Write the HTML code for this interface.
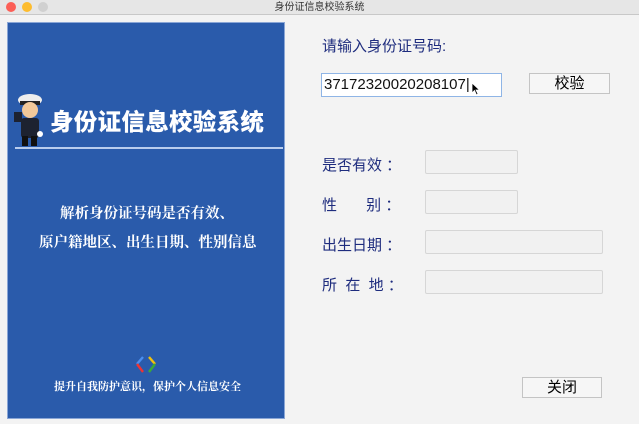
<!DOCTYPE html><html><head><meta charset="utf-8"><style>
*{margin:0;padding:0;box-sizing:border-box}
body{width:639px;height:424px;background:#f3f3f3;position:relative;overflow:hidden;font-family:"Liberation Sans","Noto Sans CJK SC",sans-serif}
.a{position:absolute;white-space:nowrap}
.tb{left:0;top:0;width:639px;height:15px;background:#e6e6e6;border-bottom:1px solid #c8c8c8;font-size:10px;color:#333;text-align:center;line-height:15px}
.dot{width:10px;height:10px;border-radius:50%;top:2px}
.panel{left:7px;top:22px;width:278px;height:397px;background:#2a5bab;border:1px solid #8aa6d6}
.w{color:#fff;font-family:"Noto Serif CJK SC",serif;font-weight:bold}
.lb{color:#1e2c7e;font-size:15px}
.f{background:#f1f1f1;border:1px solid #d6d6d6;border-radius:2px}
.btn{background:#f6f6f6;border:1px solid #c4c4c4;font-size:15px;text-align:center;color:#000}
</style></head><body>
<div class="a tb">身份证信息校验系统</div>
<div class="a dot" style="left:6px;background:#fc5f57"></div>
<div class="a dot" style="left:22px;background:#fdbc2e"></div>
<div class="a dot" style="left:38px;background:#d0d0d0"></div>
<div class="a panel"></div>
<svg class="a" style="left:10px;top:90px" width="36" height="58" viewBox="0 0 36 58">
<ellipse cx="20" cy="10" rx="12" ry="6" fill="#eee"/><rect x="10" y="11" width="20" height="4" fill="#222"/>
<circle cx="20" cy="20" r="8" fill="#f2c99a"/><rect x="11" y="28" width="18" height="20" rx="3" fill="#1d2230"/>
<rect x="4" y="22" width="8" height="10" fill="#1d2230"/><rect x="12" y="46" width="6" height="10" fill="#111"/><rect x="21" y="46" width="6" height="10" fill="#111"/>
<circle cx="30" cy="44" r="3" fill="#fff"/></svg>
<div class="a" style="left:50px;top:103px;font-size:23.5px;color:#fff;font-weight:900;font-family:'Noto Sans CJK SC',sans-serif;letter-spacing:0.3px">身份证信息校验系统</div>
<div class="a" style="left:15px;top:147px;width:268px;height:2px;background:#b9cdee"></div>
<div class="a w" style="left:60px;top:202px;font-size:14.5px">解析身份证号码是否有效、</div>
<div class="a w" style="left:39px;top:231px;font-size:14.5px">原户籍地区、出生日期、性别信息</div>
<svg class="a" style="left:134px;top:355px" width="24" height="20" viewBox="0 0 24 20">
<path d="M9 2 L3 9" stroke="#4a8ef0" stroke-width="2.4"/><path d="M3 9 L9 17" stroke="#e33" stroke-width="2.4"/>
<path d="M15 2 L21 9" stroke="#f2c10c" stroke-width="2.4"/><path d="M21 9 L15 17" stroke="#3aa83a" stroke-width="2.4"/></svg>
<div class="a w" style="left:54px;top:378px;font-size:11px">提升自我防护意识，保护个人信息安全</div>
<div class="a lb" style="left:322px;top:35px">请输入身份证号码:</div>
<div class="a" style="left:321px;top:73px;width:181px;height:24px;background:#fff;border:1px solid #8fb5e6;font-size:15px;line-height:22px;padding-left:2px;color:#111">37172320020208107|</div>
<svg class="a" style="left:471px;top:82px" width="10" height="14" viewBox="0 0 10 14"><path d="M1 1 L1 11 L3.5 8.5 L5.5 13 L7 12 L5 8 L8.5 8 Z" fill="#000" stroke="#fff" stroke-width="0.8"/></svg>
<div class="a btn" style="left:529px;top:73px;width:81px;height:21px;line-height:19px">校验</div>
<div class="a lb" style="left:322px;top:154px">是否有效 ：</div>
<div class="a lb" style="left:322px;top:194px">性&nbsp;&nbsp;&nbsp;&nbsp;&nbsp;&nbsp;&nbsp;别 ：</div>
<div class="a lb" style="left:322px;top:234px">出生日期 ：</div>
<div class="a lb" style="left:322px;top:274px">所&nbsp;&nbsp;在&nbsp;&nbsp;地 ：</div>
<div class="a f" style="left:425px;top:150px;width:93px;height:24px"></div>
<div class="a f" style="left:425px;top:190px;width:93px;height:24px"></div>
<div class="a f" style="left:425px;top:230px;width:178px;height:24px"></div>
<div class="a f" style="left:425px;top:270px;width:178px;height:24px"></div>
<div class="a btn" style="left:522px;top:377px;width:80px;height:21px;line-height:19px">关闭</div>
</body></html>
